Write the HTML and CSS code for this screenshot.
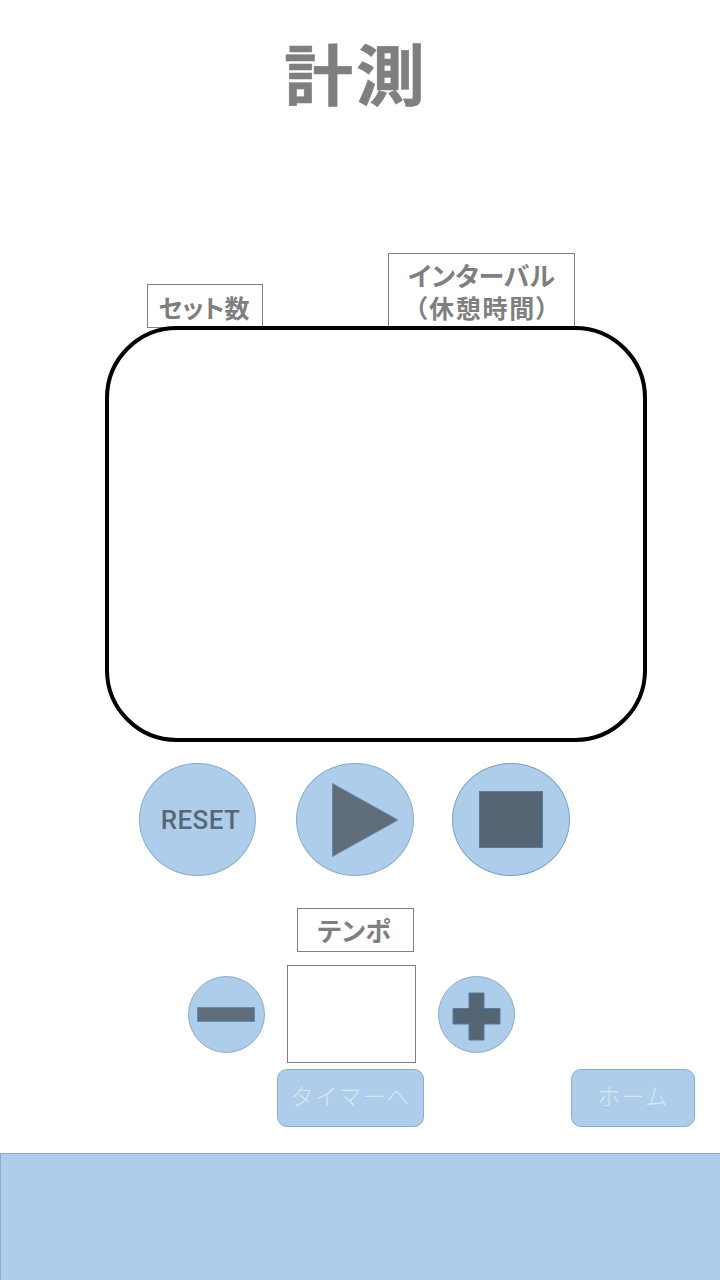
FILE: index.html
```html
<!DOCTYPE html>
<html lang="ja">
<head>
<meta charset="utf-8">
<title>計測</title>
<link rel="stylesheet" href="styles.css">
</head>
<body>
<main class="screen">
  <h1 class="title">計測</h1>
  <div class="labels">
    <div class="label label-sets"><span class="t-sets">セット数</span></div>
    <div class="label label-interval"><span class="t-int">インターバル<br><span class="t-rest">（休憩時間）</span></span></div>
  </div>
  <section class="display"></section>
  <div class="controls">
    <button class="round reset"><span>RESET</span></button>
    <button class="round play" aria-label="開始"><svg width="118" height="113" viewBox="0 0 118 113"><path class="shape light" d="M36.5 20.5V93.5L102 57Z"/></svg></button>
    <button class="round stop" aria-label="停止"><svg width="118" height="113" viewBox="0 0 118 113"><rect class="shape" x="27.5" y="28.5" width="63" height="56"/></svg></button>
  </div>
  <div class="label label-tempo"><span class="t-tempo">テンポ</span></div>
  <div class="tempo">
    <button class="round small" aria-label="減らす"><svg width="77" height="77" viewBox="0 0 77 77"><rect class="shape light" x="9.5" y="31.5" width="57" height="14"/></svg></button>
    <div class="tempo-value"></div>
    <button class="round small" aria-label="増やす"><svg width="77" height="77" viewBox="0 0 77 77"><path class="shape" d="M31 17H46V32.5H62V48H46V64H31V48H15V32.5H31Z"/></svg></button>
  </div>
  <nav class="links">
    <button class="link timer"><span>タイマーへ</span></button>
    <button class="link home"><span>ホーム</span></button>
  </nav>
  <footer class="footer"></footer>
</main>
</body>
</html>
```
FILE: styles.css
```css
* { box-sizing: border-box; }
body { margin: 0; background: #fff; font-family: "Noto Sans CJK JP", sans-serif; }
button { padding: 0; font: inherit; appearance: none; }
span { display: block; white-space: nowrap; }
svg { display: block; }
.screen { width: 720px; height: 1280px; display: flex; flex-direction: column; overflow: hidden; }
.title { margin: 0; height: 253px; padding: 24px 0 0 284px; font-size: 69px; line-height: 100px; font-weight: 700; letter-spacing: 3px; color: #7f7f7f; -webkit-text-stroke: .6px #7f7f7f; transform: scaleY(.95); transform-origin: 0 30px; }
.labels { height: 75px; flex: none; display: flex; align-items: flex-end; padding-left: 147px; gap: 125px; }
.label { border: 1px solid #7f7f7f; background: #fff; color: #7f7f7f; font-size: 26px; font-weight: 700; line-height: 32px; display: flex; flex-direction: column; align-items: center; justify-content: center; }
.label-sets { width: 116px; height: 44px; }
.label-interval { width: 187px; height: 75px; }
.t-sets { font-feature-settings: "palt"; font-size: 25px; padding-top: 1px; margin-left: -2px; }
.t-int { font-feature-settings: "palt"; text-align: center; }
.t-rest { font-size: 25px; letter-spacing: 1.8px; padding-left: 2px; }
.display { flex: none; width: 542px; height: 416px; margin: -2px 0 0 105px; border: 4px solid #000; border-radius: 72px; background: #fff; }
.controls { display: flex; gap: 39px; margin: 21px 0 0 139px; height: 113px; flex: none; }
.round { border: 1px solid #88accd; border-radius: 50%; background: #aecdea; width: 118px; height: 113px; display: flex; align-items: center; justify-content: center; flex: none; }
.round svg { margin: -1px; flex: none; }
.reset { width: 117px; margin-right: 1px; }
.reset span { font-family: Roboto, sans-serif; font-weight: 500; font-size: 26px; letter-spacing: .4px; color: #586878; padding-left: 6px; }
.stop { border-color: #77a1c8; margin-left: -1px; }
.shape { fill: #566573; stroke: #527ca3; stroke-width: 1; }
.light { fill: #5f6d7b; stroke: #648bb0; }
.label-tempo { width: 117px; height: 44px; margin: 32px 0 0 297px; flex: none; }
.t-tempo { font-feature-settings: "palt"; margin-left: -3px; }
.tempo { display: flex; align-items: center; margin: 13px 0 0 188px; height: 98px; gap: 22px; flex: none; }
.small { width: 77px; height: 77px; }
.tempo-value { width: 129px; height: 98px; border: 1px solid #7f7f7f; background: #fff; }
.links { display: flex; gap: 147px; margin: 6px 0 0 277px; height: 58px; flex: none; }
.link { height: 58px; border: 1px solid #88accd; border-radius: 10px; background: #aecdea; color: #d6e6f4; font-size: 23px; letter-spacing: 1px; font-weight: 300; display: flex; align-items: center; justify-content: center; padding-bottom: 7px; }
.timer { width: 147px; }
.home { width: 124px; }
.footer { flex: 1; margin-top: 26px; border: solid #88accd; border-width: 1px 0 0 1px; background: #aecdea; }
```
